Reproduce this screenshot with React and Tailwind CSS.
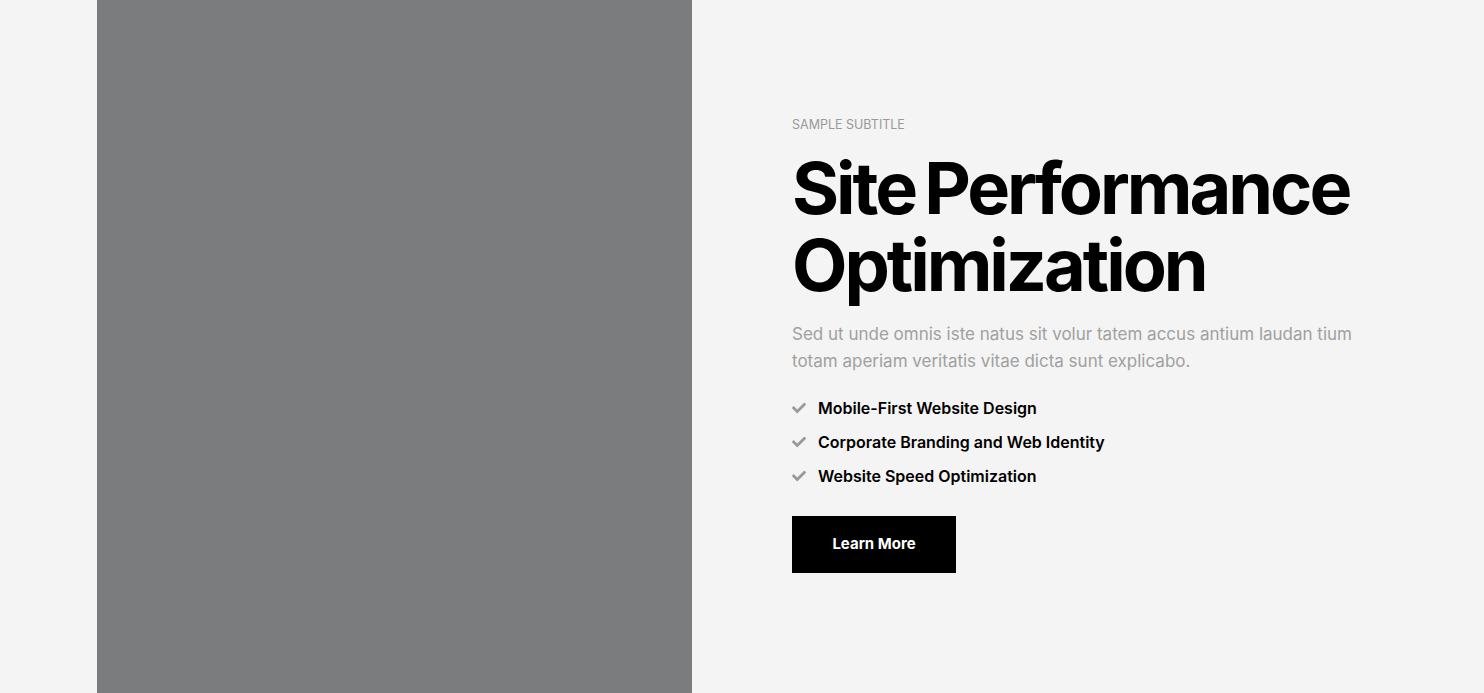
import { FaCheck } from "react-icons/fa";

const features = [
  "Mobile-First Website Design",
  "Corporate Branding and Web Identity",
  "Website Speed Optimization",
];

export default function App() {
  return (
    <div
      className="h-[693px] w-full bg-[#f4f4f4] flex overflow-hidden"
      style={{ fontFamily: "Inter, 'Noto Sans', sans-serif" }}
    >
      {/* image placeholder */}
      <div className="ml-[97px] w-[595px] h-full bg-[#7b7c7e] shrink-0" />

      {/* text column */}
      <div className="pl-[100px] pb-[4px] flex flex-col justify-center w-[700px]">
        <p className="text-[12.5px] uppercase text-[#999] leading-[16px]">
          Sample Subtitle
        </p>
        <h2 className="mt-[16px] text-[72px] font-bold leading-[77px] tracking-[-0.042em] [word-spacing:-5px] text-black whitespace-nowrap">
          Site Performance
          <br />
          Optimization
        </h2>
        <p className="mt-[18px] text-[17px] leading-[27px] text-[#a0a0a0] w-[560px]">
          Sed ut unde omnis iste natus sit volur tatem accus antium laudan tium
          totam aperiam veritatis vitae dicta sunt explicabo.
        </p>
        <ul className="mt-[23px] flex flex-col gap-[14px]">
          {features.map((f) => (
            <li key={f} className="flex items-center gap-[12px] leading-[20px]">
              <FaCheck className="w-[14px] h-[14px] text-[#999]" />
              <span className="text-[16px] font-semibold text-black">{f}</span>
            </li>
          ))}
        </ul>
        <button className="mt-[30px] w-[164px] h-[57px] bg-black text-white text-[15px] font-bold">
          Learn More
        </button>
      </div>
    </div>
  );
}
